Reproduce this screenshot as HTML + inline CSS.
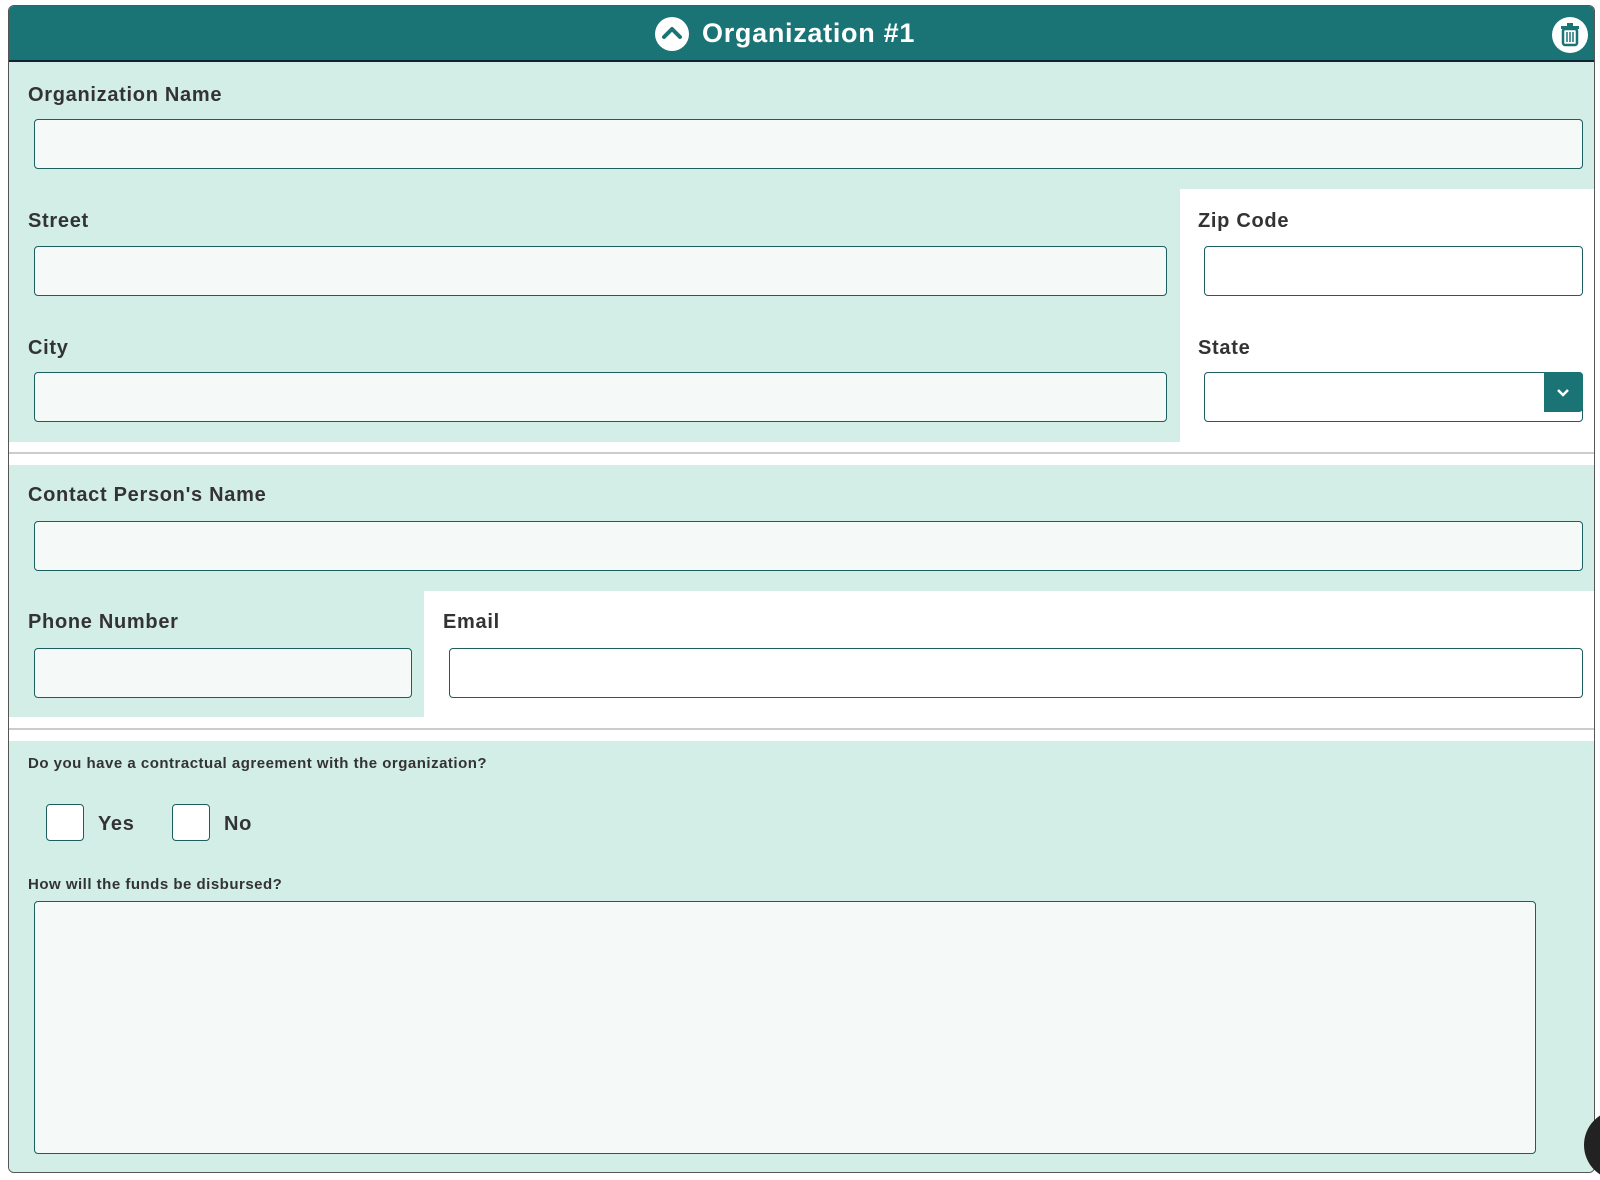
<!DOCTYPE html>
<html><head><style>
*{box-sizing:border-box;margin:0;padding:0}
body{width:1600px;height:1177px;background:#fff;font-family:"Liberation Sans",sans-serif;position:relative;overflow:hidden;color:#333}
.card{position:absolute;left:8px;top:5px;width:1587px;height:1168px;border:1px solid #555;border-radius:6px;overflow:hidden;background:#fff}
.hdr{position:absolute;left:0;top:0;width:100%;height:56px;background:#1a7475;border-bottom:2px solid #123;color:#fff}
.bg{position:absolute;background:#d3eee6}
.lbl{position:absolute;font-weight:bold;font-size:20px;color:#333;letter-spacing:0.7px}
.in{position:absolute;border:1px solid #1d5e5e;border-radius:4px;background:#f5faf8;height:50px}
.w{background:#fff}
.hr{position:absolute;left:0;width:100%;height:2px;background:#ccc}
.cb{position:absolute;width:38px;height:37px;border:1px solid #1d5e5e;border-radius:4px;background:#fff}
</style></head><body>
<div class="card">
<div class="hdr">
 <svg style="position:absolute;left:646px;top:11px" width="34" height="34" viewBox="0 0 34 34"><circle cx="17" cy="17" r="17" fill="#fff"/><path d="M9 20 L17 12 L25 20" stroke="#1a7475" stroke-width="4" fill="none" stroke-linecap="round" stroke-linejoin="round"/></svg>
 <div style="position:absolute;left:693px;top:12px;font-size:27px;font-weight:bold;letter-spacing:0.7px">Organization #1</div>
 <svg style="position:absolute;left:1543px;top:11px" width="36" height="36" viewBox="0 0 36 36"><circle cx="18" cy="18" r="18" fill="#fff"/><rect x="11" y="12" width="14" height="16" rx="2" fill="none" stroke="#1a7475" stroke-width="2.5"/><rect x="9" y="9" width="18" height="3" fill="#1a7475"/><rect x="15" y="6" width="6" height="3" fill="#1a7475"/><path d="M15 15v10M18 15v10M21 15v10" stroke="#1a7475" stroke-width="1.5"/></svg>
</div>
<div class="bg" style="left:0;top:56px;width:100%;height:127px"></div>
<div class="bg" style="left:0;top:183px;width:1171px;height:253px"></div>
<div class="hr" style="top:446px"></div>
<div class="bg" style="left:0;top:459px;width:100%;height:126px"></div>
<div class="bg" style="left:0;top:585px;width:415px;height:126px"></div>
<div class="hr" style="top:722px"></div>
<div class="bg" style="left:0;top:735px;width:100%;height:433px"></div>

<div class="lbl" style="left:19px;top:78px">Organization Name</div>
<div class="in" style="left:25px;top:113px;width:1549px"></div>
<div class="lbl" style="left:19px;top:204px">Street</div>
<div class="in" style="left:25px;top:240px;width:1133px"></div>
<div class="lbl" style="left:1189px;top:204px">Zip Code</div>
<div class="in w" style="left:1195px;top:240px;width:379px"></div>
<div class="lbl" style="left:19px;top:331px">City</div>
<div class="in" style="left:25px;top:366px;width:1133px"></div>
<div class="lbl" style="left:1189px;top:331px">State</div>
<div class="in w" style="left:1195px;top:366px;width:379px"><div style="position:absolute;right:-1px;top:-1px;width:39px;height:40px;background:#1a7475;border-radius:0 4px 4px 0"><svg width="39" height="40" viewBox="0 0 39 40"><path d="M14 18l5 5 5-5" stroke="#fff" stroke-width="2.5" fill="none"/></svg></div></div>

<div class="lbl" style="left:19px;top:478px">Contact Person's Name</div>
<div class="in" style="left:25px;top:515px;width:1549px"></div>
<div class="lbl" style="left:19px;top:605px">Phone Number</div>
<div class="in" style="left:25px;top:642px;width:378px"></div>
<div class="lbl" style="left:434px;top:605px">Email</div>
<div class="in w" style="left:440px;top:642px;width:1134px"></div>

<div class="lbl" style="left:19px;top:749px;font-size:15px;letter-spacing:0.5px">Do you have a contractual agreement with the organization?</div>
<div class="cb" style="left:37px;top:798px"></div>
<div class="lbl" style="left:89px;top:807px">Yes</div>
<div class="cb" style="left:163px;top:798px"></div>
<div class="lbl" style="left:215px;top:807px">No</div>
<div class="lbl" style="left:19px;top:870px;font-size:15px;letter-spacing:0.5px">How will the funds be disbursed?</div>
<div class="in" style="left:25px;top:895px;width:1502px;height:253px"></div>
</div>
<div style="position:absolute;left:1584px;top:1110px;width:70px;height:70px;border-radius:50%;background:#222"></div>
</body></html>
